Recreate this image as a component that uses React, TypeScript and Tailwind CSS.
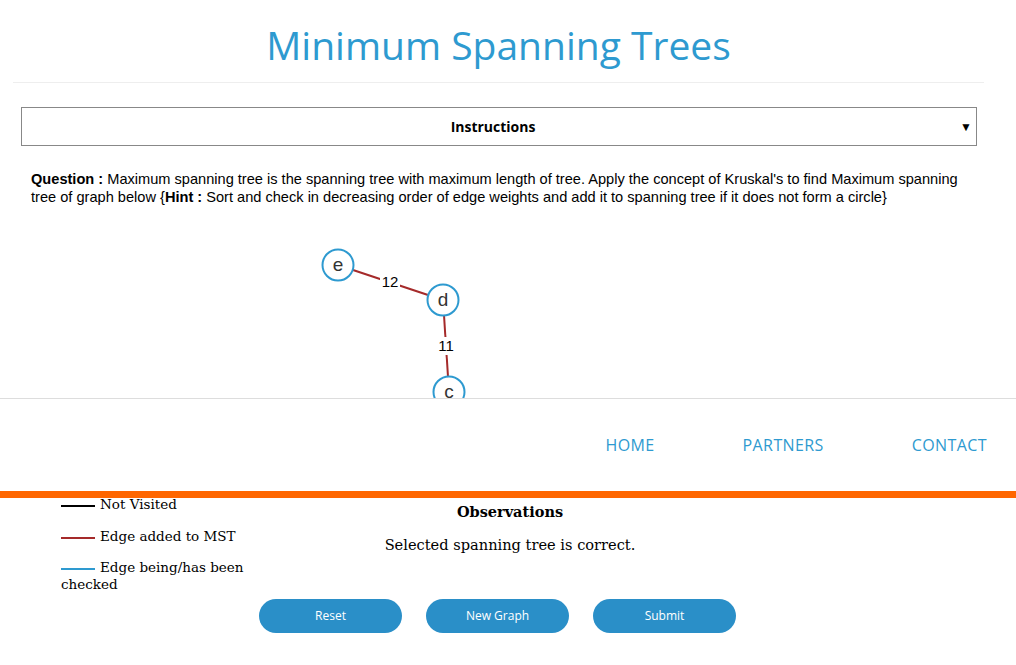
import React from "react";

// ---- Datos del grafo ----
const NODES = [
  { id: "e", x: 338, y: 264 },
  { id: "d", x: 443, y: 299 },
  { id: "c", x: 449, y: 391 },
];

const EDGES = [
  { from: "e", to: "d", w: 12, lx: 390, ly: 281 },
  { from: "d", to: "c", w: 11, lx: 446, ly: 345 },
];

const LEGEND = [
  { color: "bg-black", label: "Not Visited" },
  { color: "bg-[#a52a2a]", label: "Edge added to MST" },
  { color: "bg-[#2e9ad0]", label: "Edge being/has been checked" },
];

const TOP = 215;

function Graph() {
  const pos = (id: string) => NODES.find((n) => n.id === id)!;
  return (
    <svg width={1016} height={280} viewBox={`0 ${TOP} 1016 280`} className="mt-[10px] block">
      {EDGES.map((e) => {
        const a = pos(e.from);
        const b = pos(e.to);
        return (
          <g key={e.from + e.to}>
            <line x1={a.x} y1={a.y} x2={b.x} y2={b.y} stroke="#a52a2a" strokeWidth={2} />
            <rect x={e.lx - 10} y={e.ly - 9} width={20} height={18} fill="white" />
            <text
              x={e.lx}
              y={e.ly + 5}
              textAnchor="middle"
              fontSize={15}
              fontFamily="'Liberation Sans', Arial, sans-serif"
              fill="#000"
            >
              {e.w}
            </text>
          </g>
        );
      })}
      {NODES.map((n) => (
        <g key={n.id}>
          <circle cx={n.x} cy={n.y} r={15.5} fill="white" stroke="#2e9ad0" strokeWidth={2} />
          <text
            x={n.x}
            y={n.y + 6}
            textAnchor="middle"
            fontSize={19}
            fontFamily="'Liberation Sans', Arial, sans-serif"
            fill="#333"
          >
            {n.id}
          </text>
        </g>
      ))}
    </svg>
  );
}

export default function App() {
  return (
    <div className="relative min-h-[665px] bg-white">
      {/* Header */}
      <div className="mx-[13px] w-[971px] border-b border-[#eeeeee] pt-[20px] pb-[13px] text-center">
        <h1
          className="text-[39px] leading-[49px] text-[#2e9ad0]"
          style={{ fontFamily: "'Open Sans', sans-serif" }}
        >
          Minimum Spanning Trees
        </h1>
      </div>

      {/* Instrucciones */}
      <div className="mx-[21px] mt-[24px] flex h-[39px] w-[956px] items-center border border-[#888888] px-1 font-['Open_Sans',sans-serif]">
        <div className="flex-1 text-center text-[14px] font-bold text-black">Instructions</div>
        <span className="text-[12px] text-black">▼</span>
      </div>

      {/* Pregunta */}
      <p className="ml-[31px] mt-[24px] w-[940px] text-[14.6px] leading-[18px] text-black font-['Liberation_Sans',Arial,sans-serif]">
        <b>Question :</b> Maximum spanning tree is the spanning tree with maximum length of tree. Apply the concept
        of Kruskal's to find Maximum spanning tree of graph below {"{"}
        <b>Hint :</b> Sort and check in decreasing order of edge weights and add it to spanning tree if it does not
        form a circle{"}"}
      </p>

      <Graph />

      {/* Leyenda + observaciones */}
      <div className="flex font-['DejaVu_Serif',serif] text-black">
        <div className="ml-[61px] w-[190px] text-[13.5px] leading-[17px]">
          {LEGEND.map((l, i) => (
            <div key={l.label} className={i === 1 ? "mb-[14px]" : "mb-[15px]"}>
              <span className={`mr-[5px] inline-block h-[2px] w-[34px] align-middle ${l.color}`} />
              {l.label}
            </div>
          ))}
        </div>
        <div className="ml-[9px] w-[500px] text-center">
          <div className="mt-[6px] text-[14.5px] font-bold leading-[20px]">Observations</div>
          <div className="mt-[13px] text-[14.6px] leading-[20px]">Selected spanning tree is correct.</div>
        </div>
      </div>

      {/* Botones */}
      <div className="ml-[259px] mt-[-9px] flex gap-[24px] font-['Open_Sans',sans-serif]">
        {["Reset", "New Graph", "Submit"].map((b) => (
          <button
            key={b}
            className="h-[34px] w-[143px] rounded-full bg-[#2a8fc8] text-[12px] text-white"
          >
            {b}
          </button>
        ))}
      </div>

      {/* Barra de navegación superpuesta */}
      <div className="absolute left-0 top-[398px] w-[1016px]">
        <div className="flex h-[93px] items-center justify-end gap-[88px] border-t border-[#dddddd] bg-white pr-[29px] font-['Open_Sans',sans-serif] text-[16px] tracking-[0.4px] text-[#2e9ad0]">
          <span>HOME</span>
          <span>PARTNERS</span>
          <span>CONTACT</span>
        </div>
        <div className="h-[7px] bg-[#ff6600]" />
      </div>
    </div>
  );
}
